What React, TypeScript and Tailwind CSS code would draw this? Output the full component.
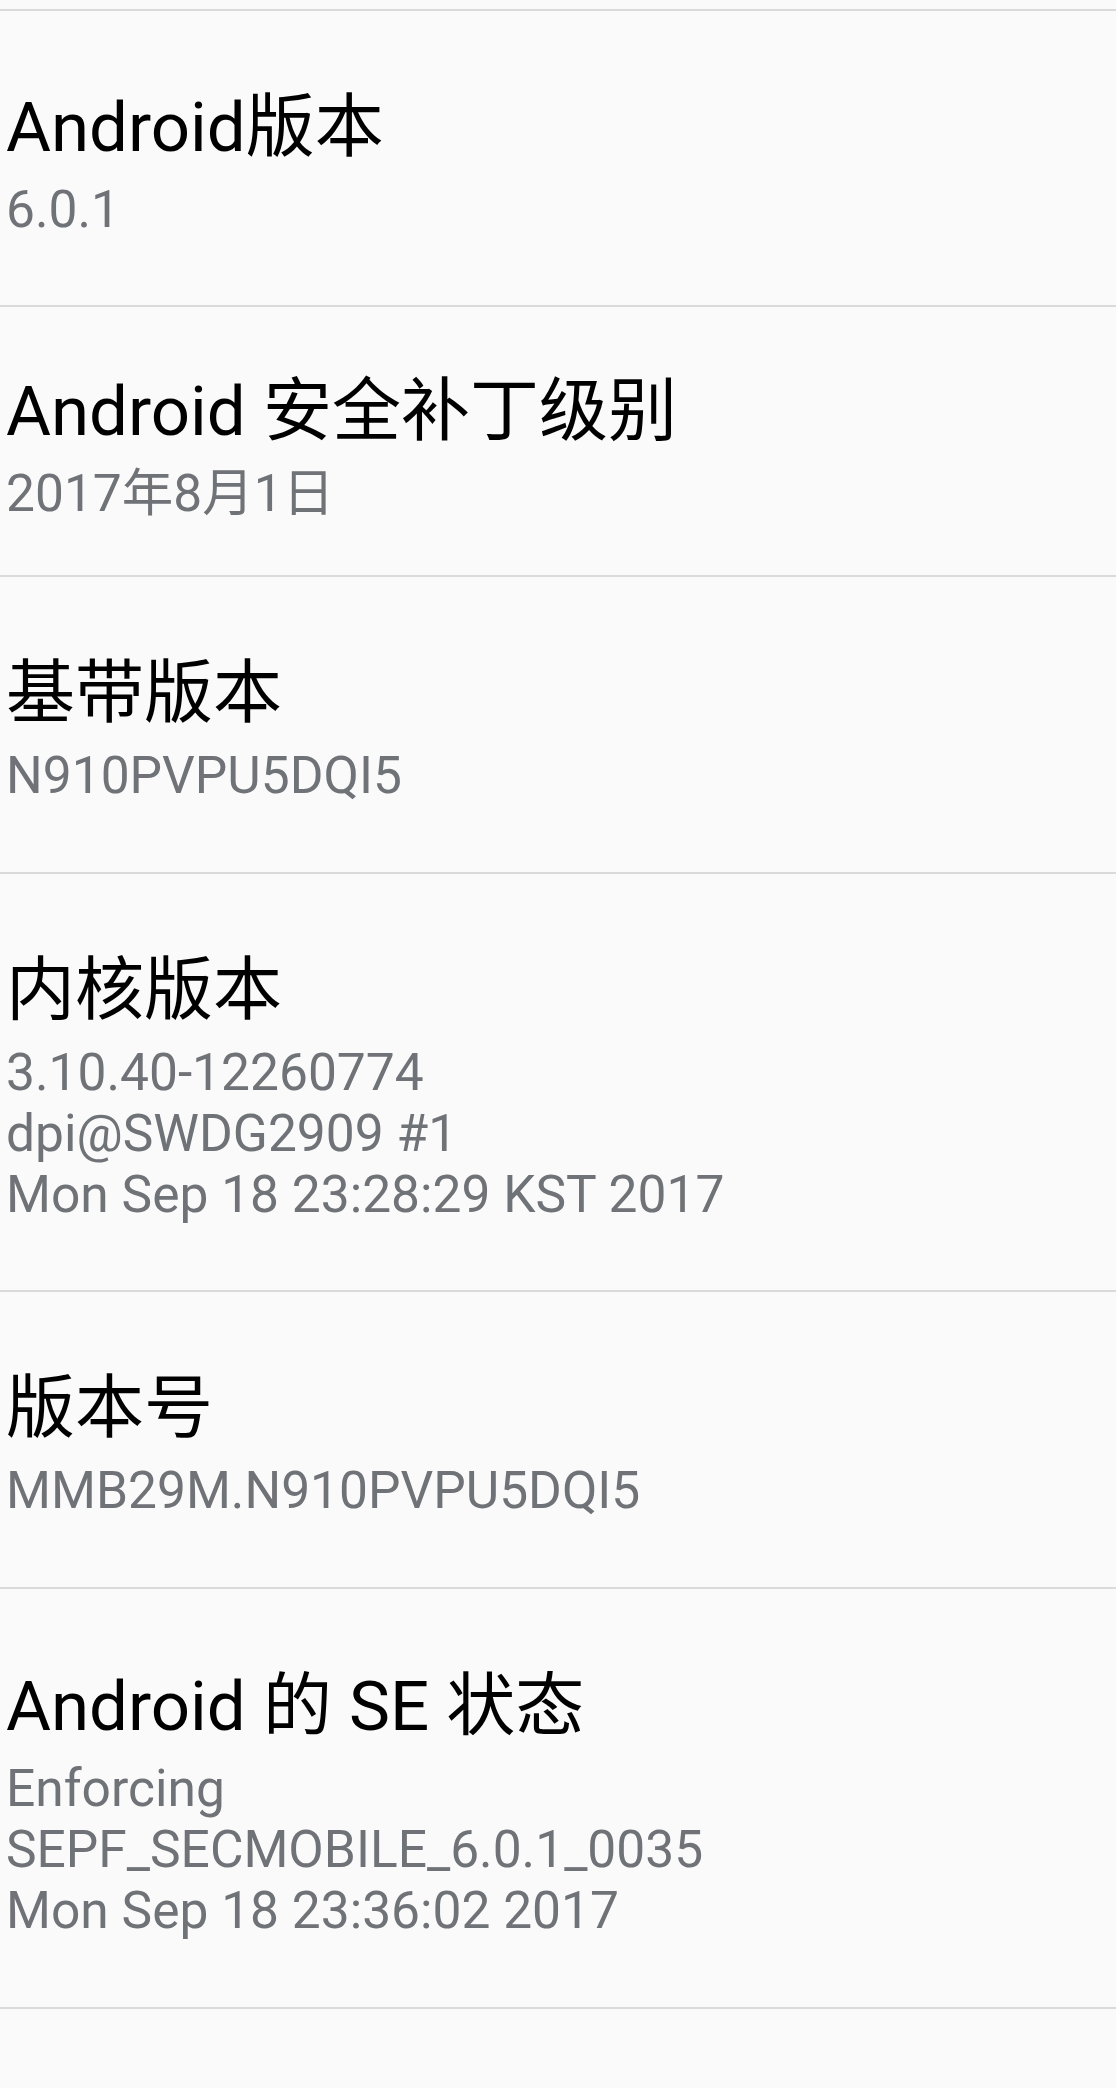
type Item = {
  title: string;
  lines: string[];
  pt: string;
  pb: string;
};

const items: Item[] = [
  { title: "Android版本", lines: ["6.0.1"], pt: "pt-[77px]", pb: "pb-[65px]" },
  { title: "Android 安全补丁级别", lines: ["2017年8月1日"], pt: "pt-[65px]", pb: "pb-[51px]" },
  { title: "基带版本", lines: ["N910PVPU5DQI5"], pt: "pt-[77px]", pb: "pb-[66px]" },
  {
    title: "内核版本",
    lines: ["3.10.40-12260774", "dpi@SWDG2909 #1", "Mon Sep 18 23:28:29 KST 2017"],
    pt: "pt-[77px]",
    pb: "pb-[65px]",
  },
  { title: "版本号", lines: ["MMB29M.N910PVPU5DQI5"], pt: "pt-[77px]", pb: "pb-[66px]" },
  {
    title: "Android 的 SE 状态",
    lines: ["Enforcing", "SEPF_SECMOBILE_6.0.1_0035", "Mon Sep 18 23:36:02 2017"],
    pt: "pt-[78px]",
    pb: "pb-[66px]",
  },
];

function InfoRow({ item }: { item: Item }) {
  return (
    <div className={`border-t-2 border-[#dadada] pl-[6px] ${item.pt} ${item.pb}`}>
      <div className="text-[69px] leading-[80px] text-black whitespace-nowrap">{item.title}</div>
      <div className="mt-[11px] text-[51.5px] leading-[61px] text-[#6f7276]">
        {item.lines.map((line) => (
          <div key={line} className="whitespace-nowrap">
            {line}
          </div>
        ))}
      </div>
    </div>
  );
}

export default function App() {
  return (
    <div
      className="min-h-[2088px] w-full bg-[#fafafa] pt-[9px]"
      style={{ fontFamily: 'Roboto, "Noto Sans CJK SC", sans-serif' }}
    >
      {items.map((item) => (
        <InfoRow key={item.title} item={item} />
      ))}
      <div className="border-t-2 border-[#dadada]" />
    </div>
  );
}
